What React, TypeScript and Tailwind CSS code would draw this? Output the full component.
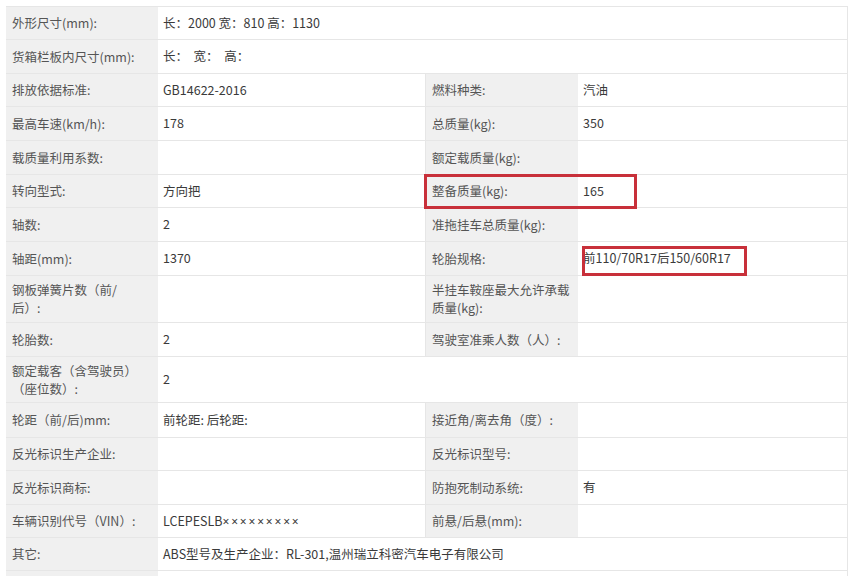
import React from "react";

type Cell = { label: React.ReactNode; value?: React.ReactNode };
type Row = { h: number; cells: Cell[]; full?: boolean };

const vin = (
  <>
    LCEPESLB
    <span style={{ fontFamily: '"Noto Sans", sans-serif' }} className="text-[12px] tracking-[1.8px]">×××××××××</span>
  </>
);

const rows: Row[] = [
  { h: 33, full: true, cells: [{ label: "外形尺寸(mm):", value: "长：2000 宽：810 高：1130" }] },
  { h: 34, full: true, cells: [{ label: "货箱栏板内尺寸(mm):", value: "长：  宽：  高：" }] },
  { h: 33, cells: [{ label: "排放依据标准:", value: "GB14622-2016" }, { label: "燃料种类:", value: "汽油" }] },
  { h: 34, cells: [{ label: "最高车速(km/h):", value: "178" }, { label: "总质量(kg):", value: "350" }] },
  { h: 34, cells: [{ label: "载质量利用系数:", value: "" }, { label: "额定载质量(kg):", value: "" }] },
  { h: 33, cells: [{ label: "转向型式:", value: "方向把" }, { label: "整备质量(kg):", value: "165" }] },
  { h: 34, cells: [{ label: "轴数:", value: "2" }, { label: "准拖挂车总质量(kg):", value: "" }] },
  { h: 34, cells: [{ label: "轴距(mm):", value: "1370" }, { label: "轮胎规格:", value: "前110/70R17后150/60R17" }] },
  {
    h: 47,
    cells: [
      { label: <>钢板弹簧片数（前/<br />后）:</>, value: "" },
      { label: <>半挂车鞍座最大允许承载<br />质量(kg):</>, value: "" },
    ],
  },
  { h: 34, cells: [{ label: "轮胎数:", value: "2" }, { label: "驾驶室准乘人数（人）:", value: "" }] },
  { h: 46, full: true, cells: [{ label: <>额定载客（含驾驶员）<br />（座位数）:</>, value: "2" }] },
  { h: 35, cells: [{ label: "轮距（前/后)mm:", value: "前轮距: 后轮距:" }, { label: "接近角/离去角（度）:", value: "" }] },
  { h: 33, cells: [{ label: "反光标识生产企业:", value: "" }, { label: "反光标识型号:", value: "" }] },
  { h: 34, cells: [{ label: "反光标识商标:", value: "" }, { label: "防抱死制动系统:", value: "有" }] },
  { h: 33, cells: [{ label: "车辆识别代号（VIN）:", value: vin }, { label: "前悬/后悬(mm):", value: "" }] },
  { h: 33, full: true, cells: [{ label: "其它:", value: "ABS型号及生产企业：RL-301,温州瑞立科密汽车电子有限公司" }] },
  { h: 34, full: true, cells: [{ label: "", value: "" }] },
];

const font = { fontFamily: '"Noto Sans CJK SC", "Noto Sans", sans-serif' };

function Label({ children }: { children: React.ReactNode }) {
  return (
    <div className="w-[152px] shrink-0 bg-[#f0f0f0] flex items-center pl-[6px] text-[#555555] whitespace-nowrap leading-[18px]">
      <div>{children}</div>
    </div>
  );
}

function Value({ children, w }: { children: React.ReactNode; w: string }) {
  return (
    <div className={`${w} flex items-center pl-[5px] text-[#3a3a3a] whitespace-pre`}>
      <div>{children}</div>
    </div>
  );
}

export default function App() {
  return (
    <div className="w-[852px] h-[576px] overflow-hidden bg-white pt-[6px] pl-[6px] text-[12.5px]" style={font}>
      <div className="relative w-[842px] border-t border-r border-[#e6e6e6]">
        {rows.map((r, i) => (
          <div key={i} className="flex border-b border-[#e6e6e6]" style={{ height: r.h }}>
            {r.full ? (
              <>
                <Label>{r.cells[0].label}</Label>
                <Value w="flex-1">{r.cells[0].value}</Value>
              </>
            ) : (
              <>
                <Label>{r.cells[0].label}</Label>
                <Value w="w-[268px] border-r border-[#e6e6e6]">{r.cells[0].value}</Value>
                <Label>{r.cells[1].label}</Label>
                <Value w="flex-1">{r.cells[1].value}</Value>
              </>
            )}
          </div>
        ))}
        <div className="absolute left-[418px] top-[167px] w-[213px] h-[35px] border-[3px] border-[#c8303a]" />
        <div className="absolute left-[576px] top-[239px] w-[165px] h-[30px] border-[3px] border-[#c8303a]" />
      </div>
    </div>
  );
}
